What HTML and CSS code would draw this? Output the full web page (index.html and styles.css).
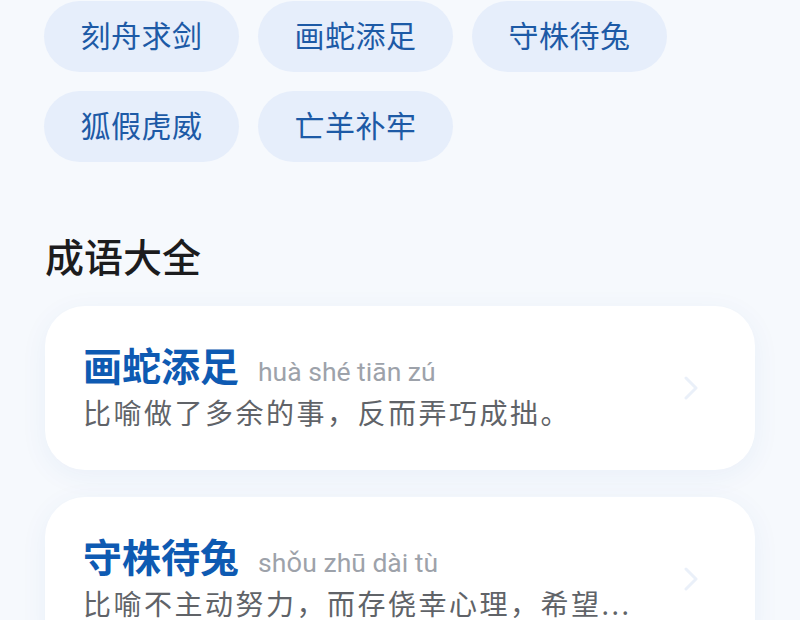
FILE: index.html
```html
<!DOCTYPE html>
<html lang="zh-CN">
<head>
<meta charset="utf-8">
<title>成语</title>
<link rel="stylesheet" href="styles.css">
</head>
<body>
<main class="page">
  <div class="chips">
    <span class="chip">刻舟求剑</span>
    <span class="chip">画蛇添足</span>
    <span class="chip">守株待兔</span>
    <span class="chip">狐假虎威</span>
    <span class="chip">亡羊补牢</span>
  </div>

  <h2 class="section-title">成语大全</h2>

  <div class="list">
    <div class="card">
      <div class="card-body">
        <div class="card-head">
          <span class="idiom">画蛇添足</span>
          <span class="pinyin">huà shé tiān zú</span>
        </div>
        <div class="desc">比喻做了多余的事，反而弄巧成拙。</div>
      </div>
      <svg class="chev" viewBox="0 0 16 24" width="16" height="24"><path d="M3 2 L13 12 L3 22" fill="none" stroke="#eaf0f9" stroke-width="3" stroke-linecap="round" stroke-linejoin="round"/></svg>
    </div>
    <div class="card">
      <div class="card-body">
        <div class="card-head">
          <span class="idiom">守株待兔</span>
          <span class="pinyin">shǒu zhū dài tù</span>
        </div>
        <div class="desc">比喻不主动努力，而存侥幸心理，希望...</div>
      </div>
      <svg class="chev" viewBox="0 0 16 24" width="16" height="24"><path d="M3 2 L13 12 L3 22" fill="none" stroke="#eaf0f9" stroke-width="3" stroke-linecap="round" stroke-linejoin="round"/></svg>
    </div>
  </div>
</main>
</body>
</html>
```
FILE: styles.css
```css
html, body {
  margin: 0;
  padding: 0;
  background: #f6f9fd;
  font-family: "Noto Sans", "Noto Sans CJK SC", sans-serif;
}
.page {
  padding: 1px 45px 0 44px;
  height: 619px;
  overflow: hidden;
}
.chips {
  display: flex;
  flex-wrap: wrap;
  gap: 19px 19px;
  width: 640px;
}
.chip {
  display: flex;
  align-items: center;
  justify-content: center;
  box-sizing: border-box;
  width: 195px;
  height: 71px;
  padding-bottom: 6px;
  border-radius: 36px;
  background: #e6eefb;
  color: #1d5aa6;
  font-size: 30px;
  letter-spacing: 0.5px;
}
.section-title {
  margin: 70px 0 0 1px;
  font-size: 39px;
  line-height: 50px;
  font-weight: 500;
  color: #1c1c1e;
}
.list {
  margin-top: 24px;
  display: flex;
  flex-direction: column;
  gap: 27px;
  padding-left: 1px;
}
.card {
  display: flex;
  align-items: center;
  background: #ffffff;
  border-radius: 40px;
  padding: 36px 56px 37px 38px;
  box-shadow: 0 6px 28px rgba(40, 90, 170, 0.06);
}
.card-body {
  flex: 1;
  min-width: 0;
}
.card-head {
  display: flex;
  align-items: baseline;
  gap: 19px;
}
.idiom {
  font-size: 39px;
  line-height: 47px;
  font-weight: 700;
  color: #0e5ab2;
}
.pinyin {
  font-family: Roboto, "Noto Sans", sans-serif;
  font-size: 26.5px;
  color: #9da2aa;
}
.desc {
  margin-top: 5px;
  font-size: 28px;
  line-height: 39px;
  letter-spacing: 2.5px;
  color: #606368;
  white-space: nowrap;
}
.chev {
  flex: none;
  display: block;
}
```
